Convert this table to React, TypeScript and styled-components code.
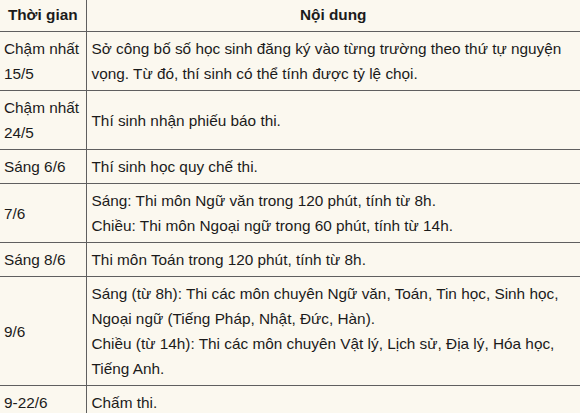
import styled, { createGlobalStyle } from "styled-components";

const GlobalStyle = createGlobalStyle`
  html, body {
    margin: 0;
    padding: 0;
    background-color: #fbf8ef;
    overflow: hidden;
  }
`;

const Page = styled.div`
  width: 580px;
  height: 413px;
  overflow: hidden;
  background-color: #fbf8ef;
`;

const Table = styled.table`
  width: 580px;
  border-collapse: collapse;
  table-layout: fixed;
  font-family: "Liberation Sans", Arial, sans-serif;
  font-size: 15.35px;
  line-height: 25px;
  color: #1b1b1b;
`;

const HeadCell = styled.th<{ $first?: boolean }>`
  height: 29px;
  padding: 0 4px 2px;
  font-weight: bold;
  text-align: center;
  vertical-align: middle;
  border-bottom: 1px solid #5f5f5f;
  border-left: ${(p) => (p.$first ? "none" : "1px solid #5f5f5f")};
`;

const TimeCell = styled.td`
  padding: 4px 2px 4px 4px;
  text-align: left;
  vertical-align: middle;
  border-bottom: 1px solid #5f5f5f;
`;

const ContentCell = styled.td`
  padding: 4px 4px 4px 5px;
  text-align: left;
  vertical-align: middle;
  border-bottom: 1px solid #5f5f5f;
  border-left: 1px solid #5f5f5f;
`;

const Line = styled.div``;

const rows: { time: string[]; content: string[] }[] = [
  {
    time: ["Chậm nhất", "15/5"],
    content: [
      "Sở công bố số học sinh đăng ký vào từng trường theo thứ tự nguyện vọng. Từ đó, thí sinh có thể tính được tỷ lệ chọi.",
    ],
  },
  { time: ["Chậm nhất", "24/5"], content: ["Thí sinh nhận phiếu báo thi."] },
  { time: ["Sáng 6/6"], content: ["Thí sinh học quy chế thi."] },
  {
    time: ["7/6"],
    content: [
      "Sáng: Thi môn Ngữ văn trong 120 phút, tính từ 8h.",
      "Chiều: Thi môn Ngoại ngữ trong 60 phút, tính từ 14h.",
    ],
  },
  { time: ["Sáng 8/6"], content: ["Thi môn Toán trong 120 phút, tính từ 8h."] },
  {
    time: ["9/6"],
    content: [
      "Sáng (từ 8h): Thi các môn chuyên Ngữ văn, Toán, Tin học, Sinh học, Ngoại ngữ (Tiếng Pháp, Nhật, Đức, Hàn).",
      "Chiều (từ 14h): Thi các môn chuyên Vật lý, Lịch sử, Địa lý, Hóa học, Tiếng Anh.",
    ],
  },
  { time: ["9-22/6"], content: ["Chấm thi."] },
];

export default function App() {
  return (
    <>
      <GlobalStyle />
      <Page>
        <Table>
          <colgroup>
            <col style={{ width: 86 }} />
            <col />
          </colgroup>
          <thead>
            <tr>
              <HeadCell $first>Thời gian</HeadCell>
              <HeadCell>Nội dung</HeadCell>
            </tr>
          </thead>
          <tbody>
            {rows.map((row, i) => (
              <tr key={i}>
                <TimeCell>
                  {row.time.map((t, j) => (
                    <Line key={j}>{t}</Line>
                  ))}
                </TimeCell>
                <ContentCell>
                  {row.content.map((c, j) => (
                    <Line key={j}>{c}</Line>
                  ))}
                </ContentCell>
              </tr>
            ))}
          </tbody>
        </Table>
      </Page>
    </>
  );
}
